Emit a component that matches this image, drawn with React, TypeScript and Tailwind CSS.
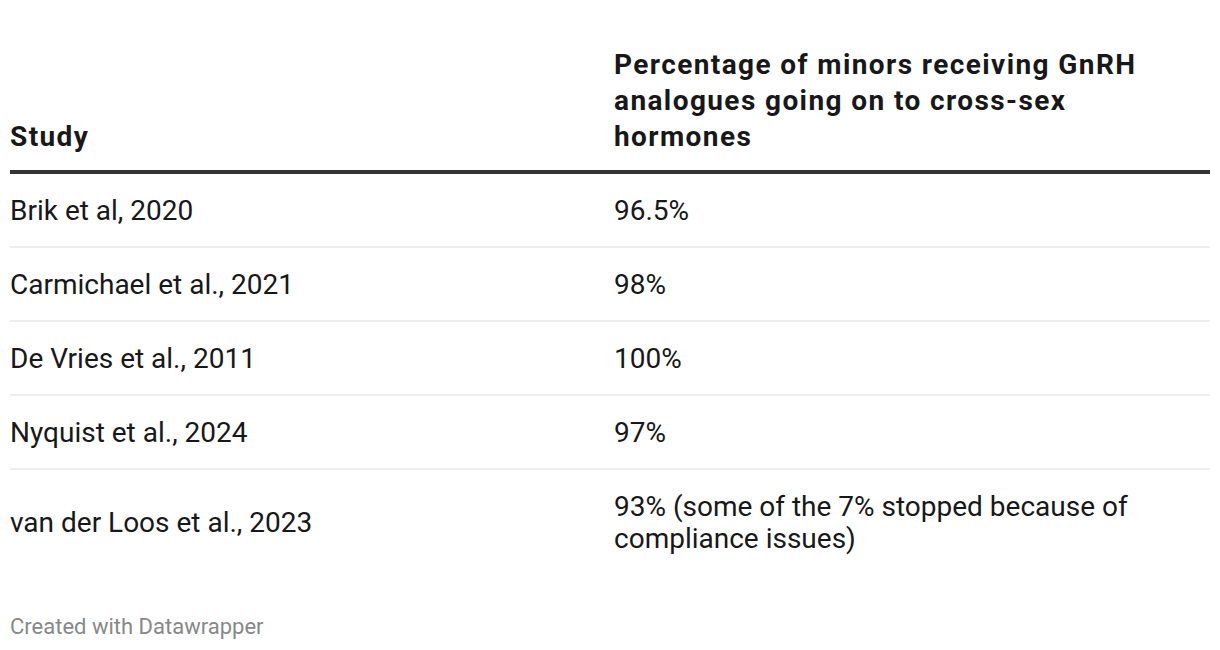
import React from 'react';

type Row = { study: string; pct: string };

const rows: Row[] = [
  { study: 'Brik et al, 2020', pct: '96.5%' },
  { study: 'Carmichael et al., 2021', pct: '98%' },
  { study: 'De Vries et al., 2011', pct: '100%' },
  { study: 'Nyquist et al., 2024', pct: '97%' },
  { study: 'van der Loos et al., 2023', pct: '93% (some of the 7% stopped because of compliance issues)' },
];

export default function App() {
  return (
    <div
      className="w-[1220px] h-[650px] bg-white px-[10px] pt-[47px] text-[#181818]"
      style={{ fontFamily: 'Roboto, "Liberation Sans", sans-serif' }}
    >
      {/* header */}
      <div className="grid grid-cols-[604px_1fr] items-end pb-[15px] border-b-4 border-[#333333] text-[28px] leading-[36px] font-bold tracking-[1.4px]">
        <div>Study</div>
        <div className="pr-[60px]">Percentage of minors receiving GnRH analogues going on to cross-sex hormones</div>
      </div>

      {rows.map((r, i) => (
        <div
          key={r.study}
          className={`grid grid-cols-[604px_1fr] items-center pt-[21px] pb-[19px] text-[28px] leading-[32px] ${
            i < rows.length - 1 ? 'border-b-2 border-[#eeeeee]' : ''
          }`}
        >
          <div>{r.study}</div>
          <div className="pr-[60px]">{r.pct}</div>
        </div>
      ))}

      <div className="mt-[40px] text-[22px] leading-[26px] text-[#888888]">Created with Datawrapper</div>
    </div>
  );
}
